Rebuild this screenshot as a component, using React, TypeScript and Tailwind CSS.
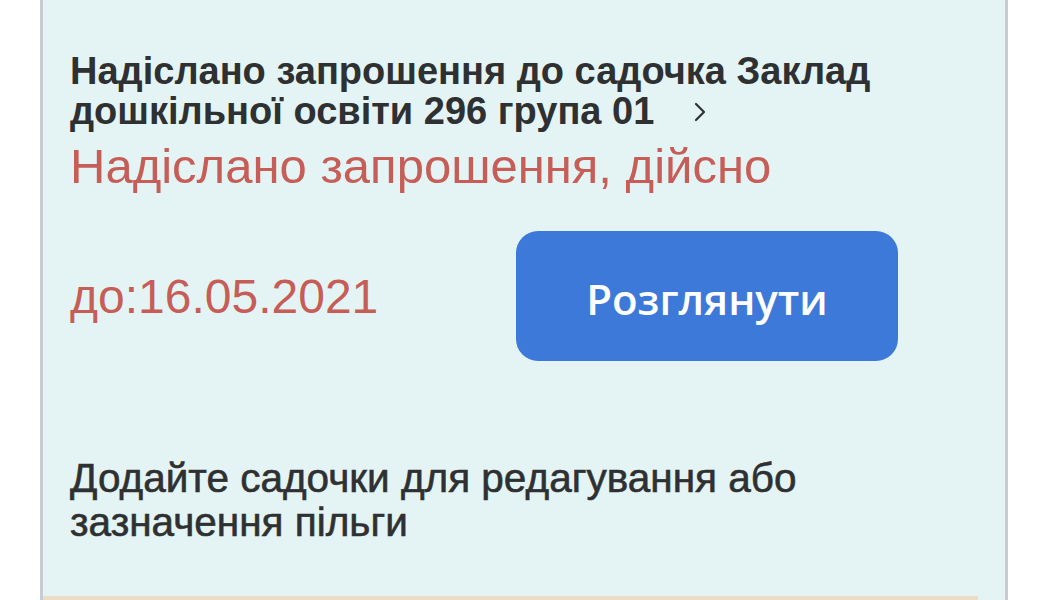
import React from "react";

export default function App() {
  return (
    <div className="w-[1048px] h-[600px] overflow-hidden bg-white flex">
      <div className="ml-[40px] w-[968px] h-[600px] bg-[#e4f4f4] border-l-[3px] border-r-[3px] border-[#c6ccd0] flex flex-col">
        <div className="flex flex-col pl-[27px] pt-[51px] font-['Liberation_Sans',Arial,sans-serif]">
          <p className="text-[38px] leading-[40px] font-bold text-[#2e3032]">
            Надіслано запрошення до садочка Заклад
            <br />
            <span className="inline-flex items-center">
              дошкільної освіти 296 група 01
              <svg
                className="ml-[39px] mt-[2px]"
                width="14"
                height="22"
                viewBox="0 0 14 22"
                fill="none"
              >
                <path
                  d="M3 3 L11 11 L3 19"
                  stroke="#2e3032"
                  strokeWidth="2.2"
                  strokeLinecap="round"
                  strokeLinejoin="round"
                />
              </svg>
            </span>
          </p>
          <p className="mt-[8px] text-[49px] leading-[54px] text-[#c65d57]">
            Надіслано запрошення, дійсно
          </p>
          <div className="mt-[38px] flex items-center">
            <span className="w-[446px] text-[48px] leading-[54px] text-[#c65d57] pt-[2px]">
              до:16.05.2021
            </span>
            <button className="w-[382px] h-[130px] rounded-[22px] bg-[#3d79d9] text-white text-[42px] font-semibold font-['Open_Sans',sans-serif] flex items-center justify-center pt-[4px]">
              Розглянути
            </button>
          </div>
          <p className="mt-[95px] text-[40.5px] leading-[44px] text-[#2e3032] [-webkit-text-stroke:0.6px_#2e3032]">
            Додайте садочки для редагування або
            <br />
            зазначення пільги
          </p>
        </div>
        <div className="mt-auto h-[4px] w-[935px] bg-[#ecdcc4]" />
      </div>
    </div>
  );
}
